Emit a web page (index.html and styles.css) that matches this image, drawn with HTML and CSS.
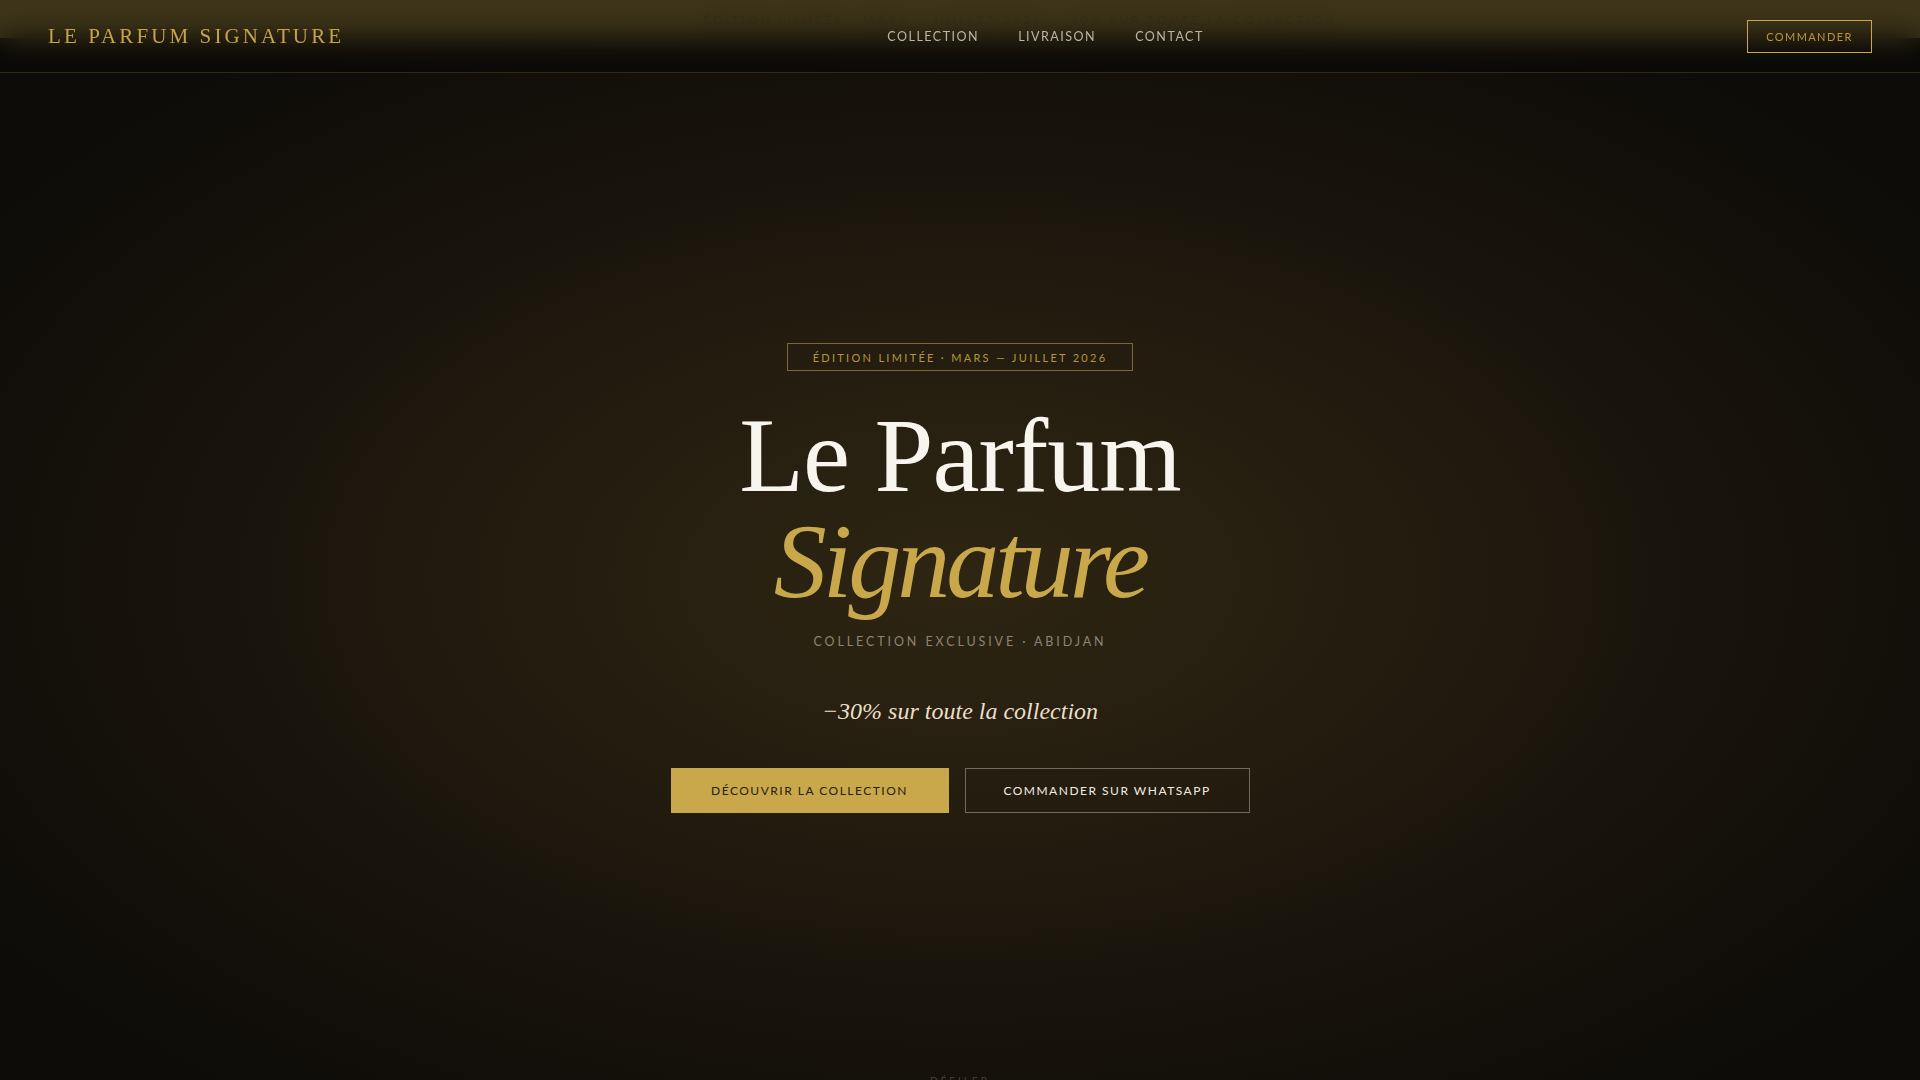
FILE: index.html
```html
<!DOCTYPE html>
<html lang="fr">
<head>
<meta charset="utf-8">
<title>Le Parfum Signature</title>
<link rel="stylesheet" href="styles.css">
</head>
<body>
<div class="announce">
  <span class="announce-text">ÉDITION LIMITÉE · MARS — JUILLET 2026 · −30% SUR TOUTE LA COLLECTION</span>
</div>
<header class="site-header">
  <a class="logo" href="#">LE PARFUM SIGNATURE</a>
  <nav class="main-nav">
    <a href="#">COLLECTION</a>
    <a href="#">LIVRAISON</a>
    <a href="#">CONTACT</a>
  </nav>
  <a class="btn-order" href="#">COMMANDER</a>
</header>
<section class="hero">
  <div class="badge">ÉDITION LIMITÉE · MARS — JUILLET 2026</div>
  <h1 class="title">
    <span class="title-main">Le Parfum</span>
    <span class="title-accent">Signature</span>
  </h1>
  <p class="subtitle">COLLECTION EXCLUSIVE · ABIDJAN</p>
  <p class="offer">−30% sur toute la collection</p>
  <div class="actions">
    <a class="btn btn-gold" href="#">DÉCOUVRIR LA COLLECTION</a>
    <a class="btn btn-outline" href="#">COMMANDER SUR WHATSAPP</a>
  </div>
  <div class="scroll-hint">DÉFILER</div>
</section>
</body>
</html>
```
FILE: styles.css
```css
* { box-sizing: border-box; }
html, body { margin: 0; padding: 0; }
body {
  background: #0e0c09;
  font-family: "Lato", "Liberation Sans", sans-serif;
  color: #efe9dd;
  overflow: hidden;
}
a { text-decoration: none; color: inherit; }

.announce {
  height: 38px;
  background: #c9a84c;
  display: flex;
  align-items: center;
  justify-content: center;
  padding-left: 120px;
}
.announce-text {
  white-space: nowrap;
  font-size: 12px;
  letter-spacing: 3px;
  color: #2a2010;
}

.site-header {
  position: fixed;
  top: 0; left: 0; right: 0;
  height: 73px;
  padding: 0 48px;
  display: flex;
  align-items: center;
  justify-content: space-between;
  background: rgba(10, 8, 6, 0.73);
  backdrop-filter: blur(14px);
  -webkit-backdrop-filter: blur(14px);
  border-bottom: 1px solid rgba(201, 168, 76, 0.2);
  z-index: 10;
}
.logo {
  font-family: "Liberation Serif", "DejaVu Serif", serif;
  font-size: 21px;
  letter-spacing: 3.1px;
  color: #c4a34a;
  padding-top: 1px;
}
.main-nav {
  display: flex;
  gap: 39px;
}
.main-nav a {
  font-size: 12.5px;
  font-weight: 400;
  letter-spacing: 1.5px;
  color: #bcb5a8;
}
.btn-order {
  display: flex;
  align-items: center;
  justify-content: center;
  width: 125px;
  height: 33px;
  border: 1px solid #c9a84c;
  font-size: 11px;
  letter-spacing: 1.4px;
  color: #b8983f;
}

.hero {
  position: relative;
  min-height: 100vh;
  display: flex;
  flex-direction: column;
  align-items: center;
  justify-content: center;
  background:
    radial-gradient(ellipse at 50% 50%, #2e2512 0%, #231c0f 33%, #17130b 58%, #0e0c09 85%);
  text-align: center;
}
.badge {
  height: 28px;
  padding: 0 25px;
  display: flex;
  align-items: center;
  border: 1px solid rgba(201, 168, 76, 0.55);
  font-size: 11px;
  letter-spacing: 2.3px;
  color: #b4953f;
}
.title {
  margin: 32px 0 0;
  font-family: "Liberation Serif", "DejaVu Serif", serif;
  font-weight: 400;
  font-size: 106px;
  line-height: 106px;
}
.title-main {
  display: block;
  color: #f8f4ee;
  letter-spacing: -1px;
}
.title-accent {
  display: block;
  font-style: italic;
  color: #c9a84c;
  letter-spacing: -4px;
}
.subtitle {
  margin: 19px 0 0;
  font-size: 12.5px;
  line-height: 16px;
  letter-spacing: 2.9px;
  color: #8c8474;
}
.offer {
  margin: 45px 0 0;
  font-family: "Liberation Serif", "DejaVu Serif", serif;
  font-style: italic;
  font-size: 24px;
  line-height: 32px;
  color: #eadfc6;
}
.actions {
  margin-top: 41px;
  display: flex;
  gap: 16px;
}
.btn {
  height: 45px;
  display: flex;
  align-items: center;
  justify-content: center;
  font-size: 12px;
  letter-spacing: 1.5px;
}
.btn-gold {
  width: 278px;
  background: #c9a84c;
  color: #2a2010;
}
.btn-outline {
  width: 285px;
  border: 1px solid rgba(239, 233, 221, 0.38);
  color: #f1ece2;
}
.scroll-hint {
  position: absolute;
  left: 0; right: 0;
  bottom: 32px;
  font-size: 10px;
  letter-spacing: 3px;
  color: #4a4234;
}
```
